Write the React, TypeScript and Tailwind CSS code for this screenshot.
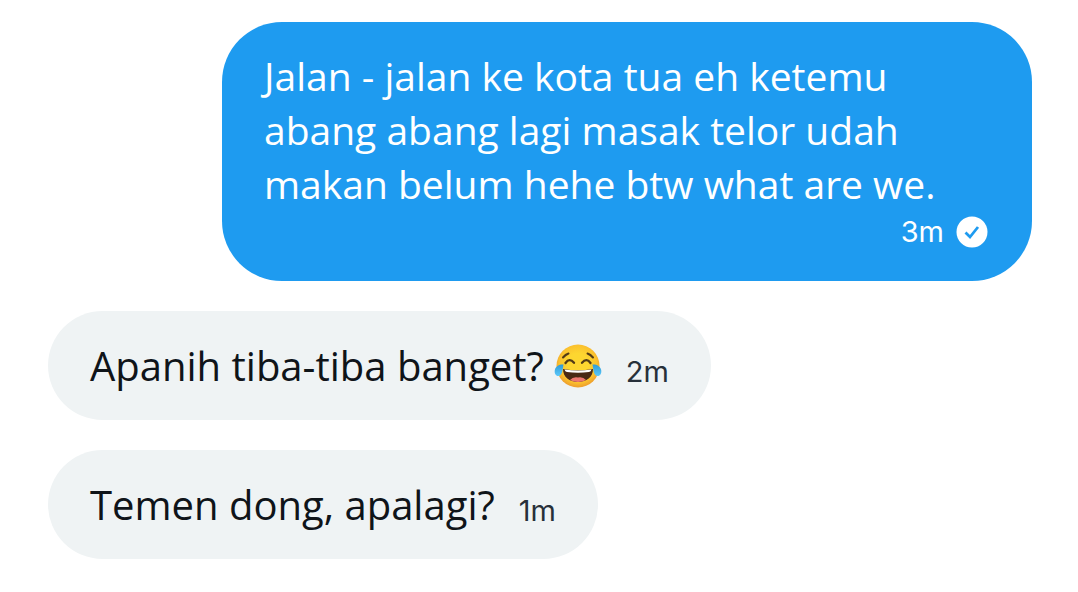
import type { ReactNode } from 'react';

type Message = {
  id: number;
  text: string;
  time: string;
  sent?: boolean;
  emoji?: ReactNode;
};

function JoyEmoji() {
  return (
    <svg viewBox="0 0 48 44" className="h-11 w-12 shrink-0" role="img" aria-label="face with tears of joy">
      <defs>
        <radialGradient id="face" cx="50%" cy="45%" r="54%">
          <stop offset="45%" stopColor="#fdd630" />
          <stop offset="80%" stopColor="#fbc22e" />
          <stop offset="100%" stopColor="#ee9f2c" />
        </radialGradient>
        <linearGradient id="tear" x1="0" y1="0" x2="0" y2="1">
          <stop offset="0%" stopColor="#2f9bd6" />
          <stop offset="100%" stopColor="#5cc8fa" />
        </linearGradient>
      </defs>
      <circle cx="24" cy="22" r="21.5" fill="url(#face)" />
      <g fill="none" stroke="#523b17" strokeLinecap="round">
        <path d="M9 13.5Q11.5 10.5 14.5 9.5" strokeWidth="2" />
        <path d="M39 13.5Q36.5 10.5 33.5 9.5" strokeWidth="2" />
        <path d="M11.5 19Q15.5 13.5 20 18.8" strokeWidth="2.3" />
        <path d="M28 18.8Q32.5 13.5 36.5 19" strokeWidth="2.3" />
      </g>
      <path d="M9 25Q24 27.5 39 25C39 33 32.5 38 24 38S9 33 9 25Z" fill="#492914" />
      <path d="M10.5 25.4Q24 27.6 37.5 25.4Q37 27.6 35 28Q24 29.6 13 28Q11 27.6 10.5 25.4Z" fill="#fff" />
      <path d="M16 36Q19 32.5 24 33.5Q29 32.5 32 36Q28.5 38 24 38T16 36Z" fill="#ed7770" />
      <path d="M9.5 20.5C6 20 1.5 22 .8 26C.2 29.5 1.8 32 4.2 32C8.5 32 8.5 25.5 9.5 20.5Z" fill="url(#tear)" />
      <path d="M38.5 20.5C42 20 46.5 22 47.2 26C47.8 29.5 46.2 32 43.8 32C39.5 32 39.5 25.5 38.5 20.5Z" fill="url(#tear)" />
    </svg>
  );
}

function SentIcon() {
  return (
    <svg viewBox="0 0 32 32" className="size-8" role="img" aria-label="Sent">
      <circle cx="16" cy="16" r="15.5" fill="#fff" />
      <path d="M9.5 16.5L14 21L22 11" fill="none" stroke="#1e9bf0" strokeWidth="2.8" />
    </svg>
  );
}

const messages: Message[] = [
  {
    id: 1,
    text: 'Jalan - jalan ke kota tua eh ketemu abang abang lagi masak telor udah makan belum hehe btw what are we.',
    time: '3m',
    sent: true,
  },
  { id: 2, text: 'Apanih tiba-tiba banget?', time: '2m', emoji: <JoyEmoji /> },
  { id: 3, text: 'Temen dong, apalagi?', time: '1m' },
];

function SentBubble({ message }: { message: Message }) {
  return (
    <li className="max-w-[810px] self-end rounded-[60px] bg-[#1e9bf0] pt-[27px] pr-11 pb-7 pl-[42px] text-white">
      <p className="pr-10 text-[39px] leading-[54px]">{message.text}</p>
      <div className="flex items-center justify-end gap-3 leading-[42px]">
        <time className="font-['Inter','Liberation_Sans',sans-serif] text-[29px]">{message.time}</time>
        <SentIcon />
      </div>
    </li>
  );
}

function ReceivedBubble({ message }: { message: Message }) {
  return (
    <li className="flex items-center rounded-[56px] bg-[#eff3f4] px-[42px] py-7 text-[#0f1419]">
      <p className="flex items-center gap-2.5 text-[40px] leading-[53px]">
        {message.text}
        {message.emoji}
      </p>
      <time className="ml-6 pt-[13px] font-['Inter','Liberation_Sans',sans-serif] text-[29px] leading-10 text-[#27303a]">
        {message.time}
      </time>
    </li>
  );
}

export default function App() {
  return (
    <main className="min-h-screen bg-white font-['Open_Sans','Noto_Sans',sans-serif]">
      <ul className="flex flex-col items-start gap-[30px] pt-[22px] pr-[46px] pb-8 pl-12">
        {messages.map((message) =>
          message.sent ? (
            <SentBubble key={message.id} message={message} />
          ) : (
            <ReceivedBubble key={message.id} message={message} />
          )
        )}
      </ul>
    </main>
  );
}
